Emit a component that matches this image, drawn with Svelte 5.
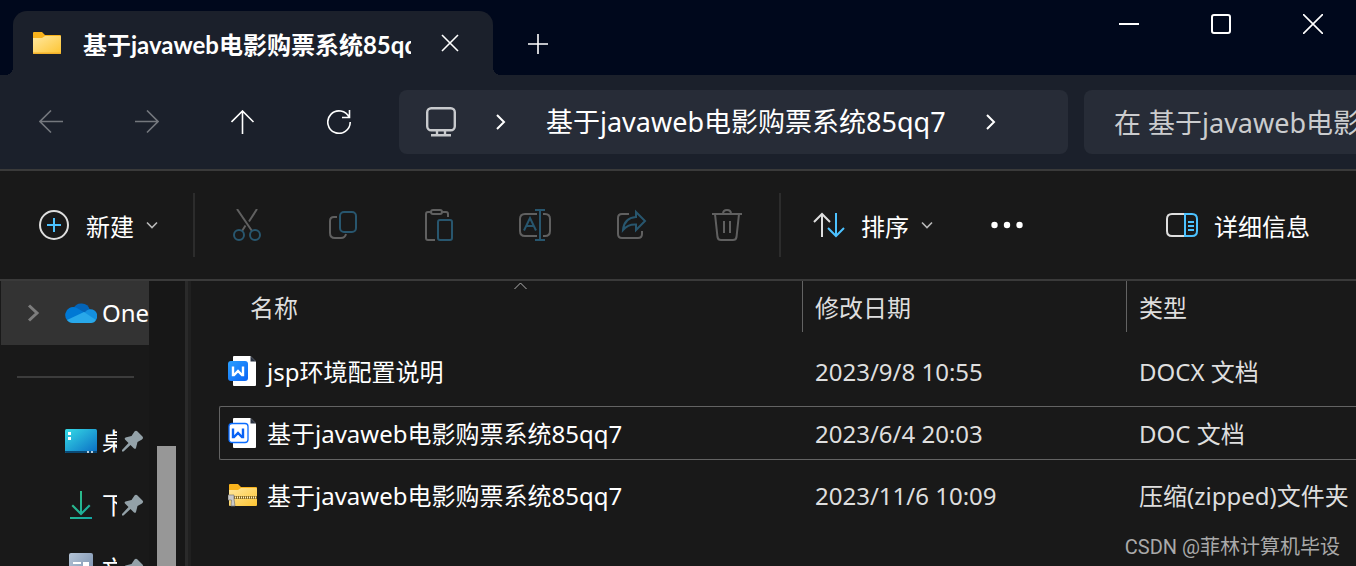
<script>
  const folder = '基于javaweb电影购票系统85qq7';

  const files = [
    { name: 'jsp环境配置说明', date: '2023/9/8 10:55', type: 'DOCX 文档', icon: 'docx' },
    { name: folder, date: '2023/6/4 20:03', type: 'DOC 文档', icon: 'doc' },
    { name: folder, date: '2023/11/6 10:09', type: '压缩(zipped)文件夹', icon: 'zip' }
  ];

  const places = [
    { name: '桌面', icon: 'desktop' },
    { name: '下载', icon: 'download' },
    { name: '文档', icon: 'documents' }
  ];

  let selected = $state(1);
  let search = $state('');
</script>

{#snippet chevron()}
  <svg class="chevron" width="12" height="12" viewBox="0 0 12 12"><path d="M1 3.5l5 5 5-5" /></svg>
{/snippet}

<div class="explorer">
  <header class="title-bar">
    <div class="tab">
      <svg width="28" height="22" viewBox="0 0 28 22">
        <defs>
          <linearGradient id="folder" x1="0" y1="0" x2="1" y2="1">
            <stop offset="0" stop-color="#ffe8a0" />
            <stop offset="1" stop-color="#fdc431" />
          </linearGradient>
        </defs>
        <path d="M0 1q0-1 1-1h8l3 3h15q1 0 1 1v5H0z" fill="#f9b31c" />
        <path d="M0 6h9l3-2h15q1 0 1 1v16q0 1-1 1H1q-1 0-1-1z" fill="url(#folder)" />
        <path d="M0 20.5v.5q0 1 1 1h26q1 0 1-1v-.5z" fill="#f2b02a" />
      </svg>
      <span class="tab-title">{folder}</span>
      <button class="tab-close" aria-label="关闭标签页">
        <svg width="18" height="18" viewBox="0 0 18 18"><path d="M1 1l16 16M17 1L1 17" /></svg>
      </button>
    </div>
    <button class="new-tab" aria-label="新标签页">
      <svg width="20" height="20" viewBox="0 0 20 20"><path d="M10 0v20M0 10h20" /></svg>
    </button>
    <div class="window-controls">
      <button aria-label="最小化">
        <svg width="20" height="20" viewBox="0 0 20 20"><path d="M0 10h20" stroke-width="2" /></svg>
      </button>
      <button aria-label="最大化">
        <svg width="20" height="20" viewBox="0 0 20 20"><rect x="1" y="1" width="18" height="18" rx="2" stroke-width="2" /></svg>
      </button>
      <button aria-label="关闭">
        <svg width="20" height="20" viewBox="0 0 20 20"><path d="M0 0l20 20M20 0L0 20" /></svg>
      </button>
    </div>
  </header>

  <nav class="nav-bar">
    <button class="dim" aria-label="后退">
      <svg width="24" height="24" viewBox="0 0 24 24"><path d="M24 11.500H1M12 .5l-11 11 11 11" /></svg>
    </button>
    <button class="dim" aria-label="前进">
      <svg width="24" height="24" viewBox="0 0 24 24"><path d="M0 11.500h23M12 .5l11 11-11 11" /></svg>
    </button>
    <button aria-label="向上">
      <svg width="24" height="24" viewBox="0 0 24 24"><path d="M11.500 24V1M.5 12l11-11 11 11" /></svg>
    </button>
    <button aria-label="刷新">
      <svg width="24" height="24" viewBox="0 0 24 24"><path d="M22.200 7.500A11.200 11.200 0 1 0 23.200 12M22.500 0v7.500H15" /></svg>
    </button>
    <div class="address">
      <svg class="pc" width="30" height="30" viewBox="0 0 30 30">
        <rect x="1.200" y="1.200" width="27.600" height="22" rx="4" />
        <path d="M11 23v5M19 23v5M5 28.200h20" />
      </svg>
      <svg width="10" height="16" viewBox="0 0 10 16"><path d="M1 1l7 7-7 7" /></svg>
      <span>{folder}</span>
      <svg width="10" height="16" viewBox="0 0 10 16"><path d="M1 1l7 7-7 7" /></svg>
    </div>
    <input class="search" type="text" aria-label="搜索" placeholder="在 {folder} 中搜索" bind:value={search} />
  </nav>

  <div class="toolbar">
    <button class="command new">
      <svg width="30" height="30" viewBox="0 0 30 30">
        <circle cx="15" cy="15" r="14" />
        <path class="accent" d="M15 8v14M8 15h14" />
      </svg>
      <span>新建</span>
      {@render chevron()}
    </button>
    <span class="divider"></span>
    <div class="actions">
      <button aria-label="剪切">
        <svg width="32" height="32" viewBox="0 0 32 32">
          <path d="M6 0l15 22M26 0l-8 12.500M14.500 16.500L11 22" />
          <circle class="accent" cx="8" cy="26" r="5" />
          <circle class="accent" cx="24" cy="26" r="5" />
        </svg>
      </button>
      <button aria-label="复制">
        <svg width="32" height="32" viewBox="0 0 32 32">
          <path d="M10 8H7q-4 0-4 4v12q0 5 5 5h6q4 0 5-4" />
          <rect class="accent" x="13" y="3" width="16" height="20" rx="4" />
        </svg>
      </button>
      <button aria-label="粘贴">
        <svg width="32" height="32" viewBox="0 0 32 32">
          <path d="M8 3H5q-2 0-2 2v24q0 2 2 2h7M19 3h4q2 0 2 2v3" />
          <rect x="8" y="1" width="11" height="4" rx="2" />
          <rect class="accent" x="15" y="11" width="14" height="20" rx="2" />
        </svg>
      </button>
      <button aria-label="重命名">
        <svg width="32" height="32" viewBox="0 0 32 32">
          <path d="M18 5H6Q1 5 1 10v12q0 5 5 5h12M24 5h2q5 0 5 5v12q0 5-5 5h-2" />
          <path class="accent" d="M21 1v30M16 1h10M16 31h10M5 21.500L11 9l6 12.500M7.500 17h7" />
        </svg>
      </button>
      <button aria-label="共享">
        <svg width="32" height="32" viewBox="0 0 32 32">
          <path d="M14 5H7Q3 5 3 9v16q0 4 4 4h16q4 0 4-4v-3" />
          <path class="accent" d="M21 3l9 9-9 9v-5.500q-8-.5-13 5.500 1-12 13-13z" />
        </svg>
      </button>
      <button aria-label="删除">
        <svg width="32" height="32" viewBox="0 0 32 32">
          <path d="M1 5h30M4 5l2.500 23q.5 3 3.500 3h12q3 0 3.500-3L28 5M12 5q0-4 4-4t4 4M13 12v12M19 12v12" />
        </svg>
      </button>
    </div>
    <span class="divider"></span>
    <button class="command sort">
      <svg width="32" height="26" viewBox="0 0 32 26">
        <path d="M9 25V2M1 10l8-8 8 8" />
        <path class="accent" d="M23 1v23M15 16l8 8 8-8" />
      </svg>
      <span>排序</span>
      {@render chevron()}
    </button>
    <button class="more" aria-label="查看更多">
      <svg width="32" height="8" viewBox="0 0 32 8">
        <circle cx="3.500" cy="4" r="3.200" /><circle cx="16" cy="4" r="3.200" /><circle cx="28.500" cy="4" r="3.200" />
      </svg>
    </button>
    <button class="command details">
      <svg width="32" height="24" viewBox="0 0 32 24">
        <path d="M19 1H6Q1 1 1 6v12q0 5 5 5h13" />
        <path class="accent" d="M19 1h7q5 0 5 5v12q0 5-5 5h-7zM22 9h6M22 13h6M22 17h6" />
      </svg>
      <span>详细信息</span>
    </button>
  </div>

  <div class="body">
    <aside>
      <div class="tree">
        <a class="place cloud" href="#onedrive">
          <svg class="arrow" width="16" height="18" viewBox="0 0 16 18"><path d="M4 1.500l8 7.500-8 7.500" /></svg>
          <svg width="32" height="22" viewBox="0 0 32 22">
            <path d="M8 7a9 9 0 0 1 17 1l-8 8z" fill="#0364b8" />
            <path d="M8 21a8 8 0 1 1 3-15.500L22 12 8 21z" fill="#0078d4" />
            <path d="M20 10a6.500 6.500 0 0 1 11 8l-8 2-7-8z" fill="#1490df" />
            <path d="M2 18l17-8 12 8q-1.500 3-5 3H8q-4 0-6-3z" fill="#28a8ea" />
          </svg>
          <span>OneDrive</span>
        </a>
        <hr />
        {#each places as place}
          <a class="place" href="#{place.icon}">
            <svg width="32" height="32" viewBox="0 0 32 32">
              {#if place.icon === 'desktop'}
                <defs>
                  <linearGradient id="desk" x1="0" y1="0" x2="1" y2="1">
                    <stop offset="0" stop-color="#36dbe6" />
                    <stop offset="1" stop-color="#0a6cc4" />
                  </linearGradient>
                </defs>
                <rect y="4" width="32" height="24" rx="1.500" fill="url(#desk)" />
                <path d="M0 26h32v.5q0 1.500-1.500 1.500h-29Q0 28 0 26.500z" fill="#0b4a76" />
                <path d="M3 7h3v3H3zM3 12h3v3H3z" fill="#fff" />
                <path d="M22 26h2v2h-2zM26 26h2v2h-2z" fill="#b5cde0" />
              {:else if place.icon === 'download'}
                <defs>
                  <linearGradient id="down" x1="0" y1="0" x2="1" y2="1">
                    <stop offset="0" stop-color="#35c481" />
                    <stop offset="1" stop-color="#12a5a5" />
                  </linearGradient>
                </defs>
                <path d="M15 2h2v20.500l7-7 1.500 1.500-9.500 9.500L6.500 17 8 15.500l7 7zM5 28h22v2H5z" fill="url(#down)" />
              {:else}
                <defs>
                  <linearGradient id="docs" x1="0" y1="0" x2="1" y2="1">
                    <stop offset="0" stop-color="#b4c4d6" />
                    <stop offset="1" stop-color="#7088a8" />
                  </linearGradient>
                </defs>
                <rect x="4" width="24" height="32" rx="2" fill="url(#docs)" />
                <path d="M8 9h8v2H8zM18 9h6v6h-6zM8 13h8v2H8zM8 18h16v2H8z" fill="#fff" />
              {/if}
            </svg>
            <span class="short">{place.name}</span>
            <svg width="22" height="22" viewBox="0 0 22 22">
              <path d="M12.500 1.500q1.500-1.500 3 0l5 5q1.500 1.500-.5 3l-4.500 2.500-1.500 6q-.6 1.500-2 .4L8.500 15 1.500 21.500 0 21.500V20l6.500-7L3 9.500q-1-1.200.5-2L9.500 6z" fill="#93a1a8" />
            </svg>
          </a>
        {/each}
      </div>
      <div class="scroll"><div class="thumb"></div></div>
    </aside>

    <main>
      <svg class="sorted" width="13" height="8" viewBox="0 0 13 8"><path d="M.5 7l6-6 6 6" /></svg>
      <table>
        <thead>
          <tr><th>名称</th><th>修改日期</th><th>类型</th></tr>
        </thead>
        <tbody>
          {#each files as file, i}
            <tr class:selected={selected === i} onclick={() => (selected = i)}>
              <td class="name">
                {#if file.icon === 'zip'}
                  <svg width="30" height="32" viewBox="0 0 30 32">
                    <path d="M1 5q0-1 1-1h8l3 3h15q1 0 1 1v4H1z" fill="#f9b31c" />
                    <path d="M1 10h9l3-2h15q1 0 1 1v16q0 1-1 1H2q-1 0-1-1z" fill="url(#folder)" />
                    <path d="M5 17.500h24" stroke="#8a6a1c" stroke-width="3" />
                    <path d="M5 17.500h24" stroke="#fff0bd" stroke-width="2" stroke-dasharray="1 1" />
                    <path d="M0 15h6v4l1 7H3l.5-6H0z" fill="#c9c9c9" stroke="#777" stroke-width=".7" />
                  </svg>
                {:else}
                  <svg width="30" height="32" viewBox="0 0 30 32">
                    <defs>
                      <linearGradient id="wps" x1="0" y1="0" x2="1" y2="1">
                        <stop offset="0" stop-color="#2ba0ff" />
                        <stop offset="1" stop-color="#0a63f5" />
                      </linearGradient>
                    </defs>
                    <path d="M5 1q0-1 1-1h16.500L28 5.500V29q0 1-1 1H6q-1 0-1-1z" fill="#fff" />
                    <path d="M22.500 0v5.500H28z" fill="#2b3240" />
                    {#if file.icon === 'docx'}
                      <rect y="5" width="20" height="20" rx="3" fill="url(#wps)" />
                      <path class="mark" d="M5 10.500v8.500h1l4-4 4 4h1v-8.500" stroke="#fff" />
                    {:else}
                      <rect x="1" y="5.500" width="19" height="19" rx="3" fill="#fff" stroke="#0a6cff" stroke-width="1.300" />
                      <path class="mark" d="M5 10.500v8.500h1l4-4 4 4h1v-8.500" stroke="#0a63f5" />
                    {/if}
                  </svg>
                {/if}
                <span>{file.name}</span>
              </td>
              <td>{file.date}</td>
              <td>{file.type}</td>
            </tr>
          {/each}
        </tbody>
      </table>
    </main>
  </div>

  <span class="watermark">CSDN @菲林计算机毕设</span>
</div>

<style>
  :global(body) {
    margin: 0;
    background: #191919;
  }

  .explorer {
    position: relative;
    display: flex;
    flex-direction: column;
    height: 100vh;
    overflow: hidden;
    background: #191919;
    color: #fff;
    font-family: 'Noto Sans', 'Noto Sans CJK SC', sans-serif;
    font-size: 24px;
    line-height: 32px;
    white-space: nowrap;
  }

  button {
    display: flex;
    align-items: center;
    justify-content: center;
    flex-shrink: 0;
    padding: 0;
    border: 0;
    background: none;
    color: inherit;
    font: inherit;
  }

  svg {
    flex-shrink: 0;
  }

  .title-bar {
    display: flex;
    flex-shrink: 0;
    height: 75px;
    background: #00081c;
  }

  .title-bar button svg,
  .nav-bar svg {
    fill: none;
    stroke: #fff;
    stroke-width: 1.6;
  }

  .tab {
    position: relative;
    display: flex;
    align-items: center;
    box-sizing: border-box;
    width: 480px;
    height: 64px;
    margin: 11px 0 0 13px;
    padding-left: 20px;
    border-radius: 14px 14px 0 0;
    background: #1b202b;
  }

  .tab::before,
  .tab::after {
    content: '';
    position: absolute;
    bottom: 0;
    width: 8px;
    height: 8px;
  }

  .tab::before {
    right: 100%;
    background: radial-gradient(circle at 0 0, transparent 8px, #1b202b 8px);
  }

  .tab::after {
    left: 100%;
    background: radial-gradient(circle at 100% 0, transparent 8px, #1b202b 8px);
  }

  .tab-title {
    flex: 1;
    margin-left: 22px;
    padding-top: 3px;
    overflow: hidden;
    font-family: Lato, 'Noto Sans CJK SC', sans-serif;
    font-weight: 700;
  }

  .tab-close {
    width: 78px;
    height: 40px;
    margin-right: 4px;
  }

  .new-tab {
    width: 90px;
    margin-top: 13px;
  }

  .window-controls {
    display: flex;
    height: 48px;
    margin: 0 -3px 0 auto;
  }

  .window-controls button {
    width: 92px;
  }

  .nav-bar {
    display: flex;
    flex-shrink: 0;
    height: 64px;
    padding: 15px 0 15px 3px;
    border-bottom: 2px solid #3a3a3a;
    background: #1b202b;
  }

  .nav-bar button {
    width: 96px;
  }

  .nav-bar .dim svg {
    stroke: #74777d;
  }

  .address {
    display: flex;
    align-items: center;
    flex: 642 1 0;
    gap: 40px;
    box-sizing: border-box;
    min-width: 0;
    margin-left: 12px;
    padding-left: 27px;
    overflow: hidden;
    border-radius: 8px;
    background: #272c37;
    font-size: 27px;
  }

  .address svg {
    stroke-width: 2;
  }

  .address .pc {
    stroke: #c8cacd;
    stroke-width: 2.4;
  }

  .search {
    flex: 242 1 0;
    box-sizing: border-box;
    min-width: 0;
    margin-left: 16px;
    padding: 0 0 0 30px;
    border: 0;
    border-radius: 8px 0 0 8px;
    background: #272c37;
    color: #fff;
    font-family: inherit;
    font-size: 27px;
  }

  .search::placeholder {
    color: #cbccce;
    opacity: 1;
  }

  .toolbar {
    display: flex;
    align-items: center;
    flex-shrink: 0;
    height: 108px;
    border-bottom: 2px solid #3a3a3a;
  }

  .toolbar svg {
    fill: none;
    stroke: #dedede;
    stroke-width: 2;
  }

  .toolbar .accent {
    stroke: #4cc2ff;
  }

  .toolbar .chevron {
    stroke: #b8b8b8;
    stroke-width: 1.6;
  }

  .command span {
    margin: 0 12px 0 16px;
    padding-top: 3px;
  }

  .new {
    margin: 0 35px 0 39px;
  }

  .new span {
    margin-left: 17px;
  }

  .divider {
    flex-shrink: 0;
    width: 2px;
    height: 64px;
    background: #2c2c2c;
  }

  .actions {
    display: flex;
    margin: 0 4px;
  }

  .actions button {
    width: 96px;
    height: 64px;
  }

  .actions svg {
    stroke: #606060;
  }

  .actions .accent {
    stroke: #28566e;
  }

  .sort {
    margin-left: 32px;
  }

  .more {
    width: 96px;
    height: 64px;
    margin-left: 26px;
  }

  .more svg {
    fill: #fff;
    stroke: none;
  }

  .details {
    margin: 0 34px 0 auto;
  }

  .body {
    display: flex;
    flex: 1;
    min-height: 0;
  }

  aside {
    display: flex;
    flex-shrink: 0;
    border-right: 3px solid #2a2a2a;
    box-shadow: 3px 0 #202020;
    background: #171717;
  }

  .tree {
    box-sizing: border-box;
    width: 149px;
    padding-left: 1px;
    overflow: hidden;
    background: #191919;
  }

  .place {
    display: flex;
    align-items: center;
    height: 64px;
    padding-left: 64px;
    color: #fff;
    text-decoration: none;
  }

  .place span {
    margin-left: 5px;
  }

  .cloud {
    padding-left: 24px;
    background: #333;
  }

  .arrow {
    margin-right: 24px;
    fill: none;
    stroke: #7d7d7d;
    stroke-width: 3;
  }

  .place .short {
    width: 15px;
    margin-right: 5px;
    overflow: hidden;
  }

  hr {
    height: 2px;
    margin: 31px 15px 31px 16px;
    border: 0;
    background: #3c3c3c;
  }

  .scroll {
    display: flex;
    box-sizing: border-box;
    width: 36px;
    padding: 165px 9px 0 8px;
  }

  .thumb {
    flex: 1;
    background: #979797;
  }

  main {
    position: relative;
    flex: 1;
    min-width: 0;
    padding-left: 31px;
  }

  .sorted {
    position: absolute;
    top: 1px;
    left: 326px;
    fill: none;
    stroke: #b0b0b0;
  }

  table,
  thead,
  tbody {
    display: block;
  }

  tr {
    display: grid;
    grid-template-columns: minmax(0, 582fr) minmax(0, 324fr) minmax(0, 230fr);
    box-sizing: border-box;
    height: 54px;
    margin-bottom: 8px;
    border: 1px solid transparent;
    border-right: 0;
  }

  tr.selected {
    border-color: #636363;
    border-radius: 2px 0 0 2px;
  }

  thead tr {
    height: 51px;
    margin-bottom: 12px;
    border-width: 0 0 0 1px;
  }

  th,
  td {
    display: flex;
    align-items: center;
    padding: 2px 0 0 13px;
    color: #dedede;
  }

  th {
    padding-left: 12px;
    border-left: 1px solid #636363;
    font-weight: 400;
  }

  th:first-child {
    padding-left: 30px;
    border-left: 0;
  }

  .name {
    gap: 9px;
    padding-left: 8px;
    color: #fff;
  }

  .mark {
    fill: none;
    stroke-width: 2.4;
  }

  .watermark {
    position: absolute;
    right: 16px;
    bottom: 3px;
    color: #a9a9a9;
    font-family: Roboto, 'Noto Sans CJK SC', sans-serif;
    font-size: 20px;
  }
</style>
